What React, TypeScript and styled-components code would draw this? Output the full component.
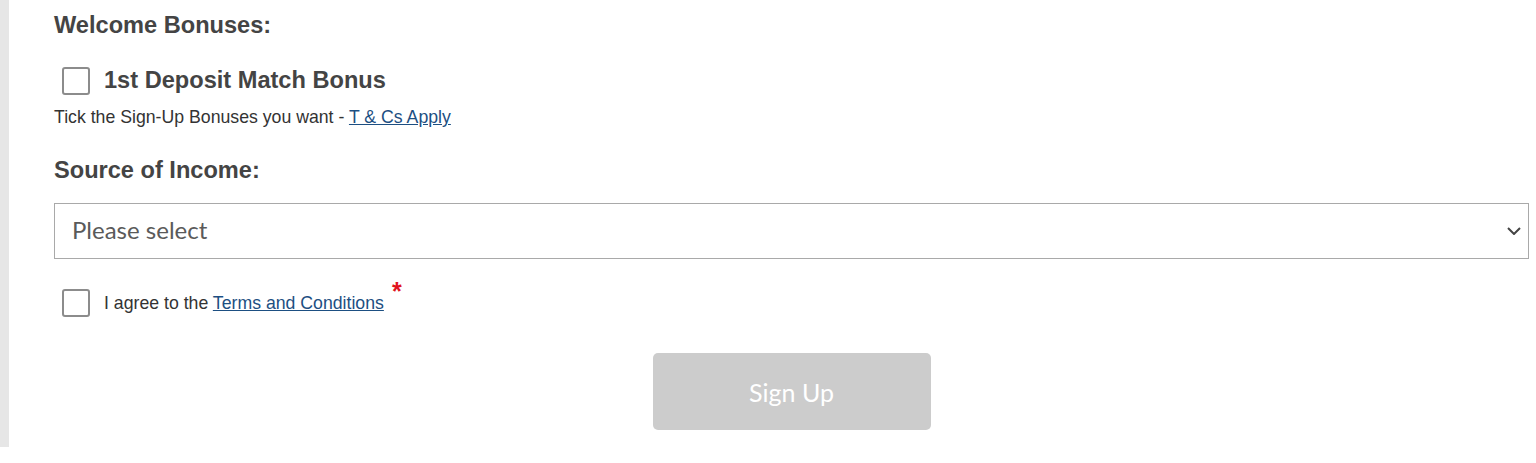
import React from "react";
import styled, { createGlobalStyle } from "styled-components";

const GlobalStyle = createGlobalStyle`
  body {
    margin: 0;
    background: #ffffff;
    font-family: "Liberation Sans", Arial, sans-serif;
  }
`;

const Page = styled.div`
  display: flex;
  align-items: flex-start;
  height: 463px;
`;

const SideBar = styled.div`
  width: 9px;
  height: 447px;
  background-color: #e6e6e6;
  flex-shrink: 0;
`;

const Form = styled.div`
  flex: 1;
  display: flex;
  flex-direction: column;
  padding: 11px 7px 0 45px;
`;

const Heading = styled.div<{ $top?: number }>`
  font-size: 23.6px;
  line-height: 28px;
  font-weight: bold;
  color: #444444;
  margin-top: ${(p) => p.$top || 0}px;
`;

const CheckRow = styled.label<{ $top: number }>`
  display: flex;
  align-items: center;
  gap: 14px;
  margin-top: ${(p) => p.$top}px;
  padding-left: 8px;
  cursor: pointer;
`;

const Box = styled.span`
  width: 28px;
  height: 28px;
  box-sizing: border-box;
  border: 2px solid #8c8c8c;
  border-radius: 3px;
  background: #ffffff;
  flex-shrink: 0;
`;

const BonusLabel = styled.span`
  font-size: 23.6px;
  font-weight: bold;
  color: #444444;
  position: relative;
  top: -1px;
`;

const Note = styled.div`
  font-size: 17.7px;
  line-height: 22px;
  color: #333333;
  margin-top: 11px;
`;

const Link = styled.a`
  color: #1d4f82;
  text-decoration: underline;
`;

const Select = styled.div`
  display: flex;
  align-items: center;
  justify-content: space-between;
  height: 56px;
  box-sizing: border-box;
  border: 1px solid #a9a9a9;
  margin-top: 19px;
  padding: 0 7px 4px 17px;
  font-family: Lato, "Open Sans", sans-serif;
  font-size: 24px;
  color: #5a5a5a;
`;

const Chevron = styled.svg`
  margin-top: 4px;
`;

const AgreeText = styled.span`
  font-size: 17.7px;
  color: #333333;
`;

const Star = styled.span`
  color: #e0141e;
  font-size: 25px;
  font-weight: bold;
  margin-left: 8px;
  position: relative;
  top: -9px;
  line-height: 0;
`;

const ButtonWrap = styled.div`
  display: flex;
  justify-content: center;
  margin-top: 36px;
`;

const SignUp = styled.button`
  width: 278px;
  height: 77px;
  border: none;
  border-radius: 5px;
  background-color: #cccccc;
  color: #ffffff;
  font-family: Lato, "Open Sans", sans-serif;
  font-size: 25px;
`;

export default function App() {
  return (
    <>
      <GlobalStyle />
      <Page>
        <SideBar />
        <Form>
          <Heading>Welcome Bonuses:</Heading>
          <CheckRow $top={28}>
            <Box />
            <BonusLabel>1st Deposit Match Bonus</BonusLabel>
          </CheckRow>
          <Note>
            Tick the Sign-Up Bonuses you want - <Link href="#">T &amp; Cs Apply</Link>
          </Note>
          <Heading $top={28}>Source of Income:</Heading>
          <Select>
            <span>Please select</span>
            <Chevron width="14" height="8" viewBox="0 0 14 8">
              <path d="M1 1 L7 7 L13 1" fill="none" stroke="#444" strokeWidth="2" />
            </Chevron>
          </Select>
          <CheckRow $top={30}>
            <Box />
            <AgreeText>
              I agree to the <Link href="#">Terms and Conditions</Link>
              <Star>*</Star>
            </AgreeText>
          </CheckRow>
          <ButtonWrap>
            <SignUp>Sign Up</SignUp>
          </ButtonWrap>
        </Form>
      </Page>
    </>
  );
}
